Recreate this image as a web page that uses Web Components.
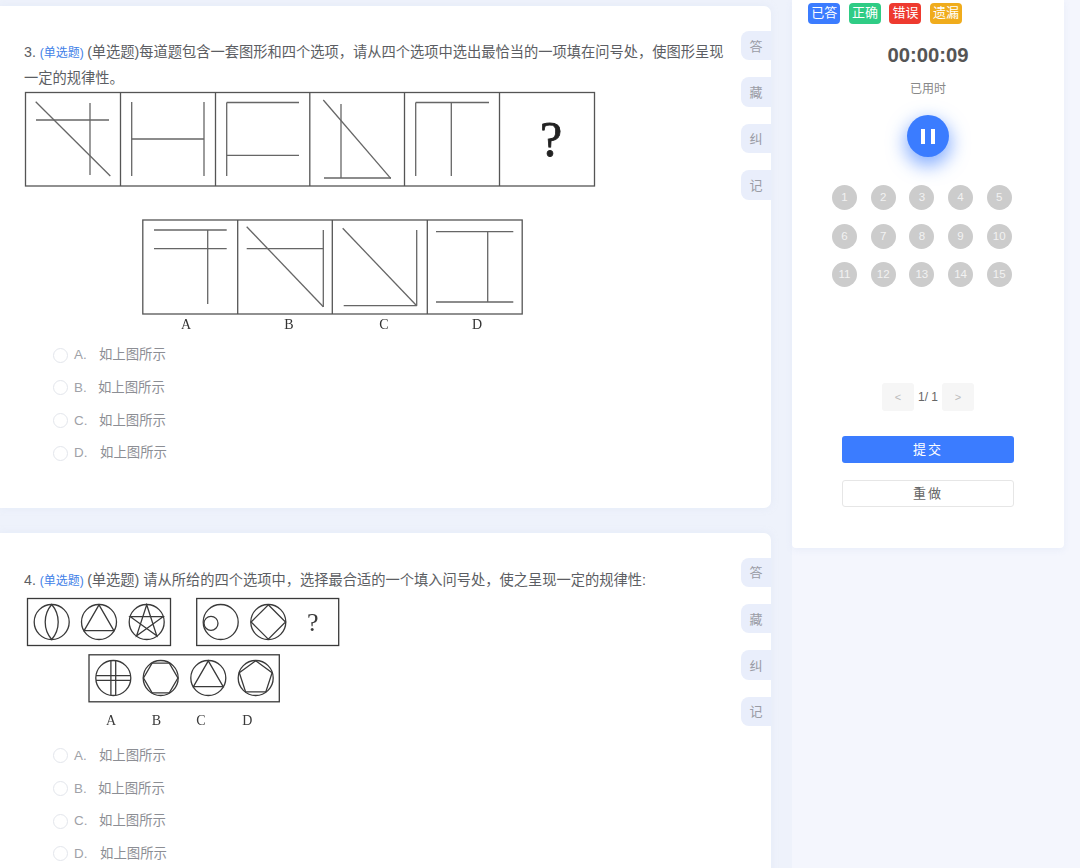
<!DOCTYPE html>
<html lang="zh"><head><meta charset="utf-8"><title>答题</title>
<style>
html,body{margin:0;height:100%;overflow:hidden;background:#f4f6fd;font-family:"Liberation Sans","Noto Sans CJK SC",sans-serif}
</style></head><body>
<exam-page>
  <q-card>
    <q-title num="3." tag="(单选题)">(单选题)每道题包含一套图形和四个选项，请从四个选项中选出最恰当的一项填在问号处，使图形呈现一定的规律性。</q-title>
    <fig-lines></fig-lines>
    <q-option key="A." gap="12.3">如上图所示</q-option><q-option key="B." gap="11.3">如上图所示</q-option><q-option key="C." gap="11.6">如上图所示</q-option><q-option key="D." gap="12.6">如上图所示</q-option>
  </q-card>
  <q-card style="--top:34px">
    <q-title num="4." tag="(单选题)">(单选题) 请从所给的四个选项中，选择最合适的一个填入问号处，使之呈现一定的规律性:</q-title>
    <fig-circles></fig-circles>
    <q-option key="A." gap="12.3">如上图所示</q-option><q-option key="B." gap="11.3">如上图所示</q-option><q-option key="C." gap="11.6">如上图所示</q-option><q-option key="D." gap="12.6">如上图所示</q-option>
  </q-card>
  <side-panel slot="side"></side-panel>
</exam-page>
<script>
function el(name,css,html){
  customElements.define(name,class extends HTMLElement{
    connectedCallback(){
      if(this.shadowRoot)return;
      const r=this.attachShadow({mode:'open'});
      r.innerHTML='<style>'+css+'</style>'+(typeof html==='function'?html(this):html);
    }
  });
}
el('exam-page',`:host{display:flex;align-items:flex-start;width:1080px;height:868px;overflow:hidden}
.main{width:771px;padding:6px 21px 0 0;background:#eef2fb;display:flex;flex-direction:column;gap:25px;min-height:868px}
`,`<div class="main"><slot></slot></div><slot name="side"></slot>`);
el('q-card',`:host{display:flex;background:#fff;border-radius:0 7px 7px 0;box-shadow:0 0 6px rgba(220,228,245,.5)}
.body{flex:1;min-width:0;padding:var(--top,33px) 0 38px 0}
.tabs{width:30px;flex:none;padding-top:25px;display:flex;flex-direction:column;gap:17px}
.tab{height:29.4px;background:#e9eefb;border-radius:8px 0 0 8px;display:flex;align-items:center;justify-content:center;font-size:13px;color:#9a9ca5;padding-bottom:1px;box-sizing:border-box}`,
`<div class="body"><slot></slot></div><div class="tabs"><div class="tab">答</div><div class="tab">藏</div><div class="tab">纠</div><div class="tab">记</div></div>`);
el('q-title',`:host{display:block;padding:0 14px 0 24px;font-size:14.26px;line-height:26px;color:#5c5e63}
.t{color:#3f7fe8;font-size:12px;line-height:1;margin-right:-.7px}`,
h=>`${h.getAttribute('num')} <span class="t">${h.getAttribute('tag')}</span> <slot></slot>`);
el('q-option',`:host{display:flex;align-items:center;height:32.67px;padding-left:53px;font-size:13.4px;color:#8c8e94}
.r{width:13px;height:13px;border:1px solid #e3e6ec;border-radius:50%;margin-right:6px;flex:none;background:#fff}
.x{line-height:20px}
.k{color:#a0a2a8}`,
h=>`<span class="r"></span><span class="x"><span class="k" style="margin-right:${h.getAttribute('gap')}px">${h.getAttribute('key')}</span><slot></slot></span>`);

const L=a=>a.map(p=>`<line x1="${p[0]}" y1="${p[1]}" x2="${p[2]}" y2="${p[3]}"/>`).join('');
el('fig-lines',`:host{display:block;height:248px}
svg{display:block;filter:blur(.35px)}
text{font-family:"Liberation Serif",serif;fill:#333;stroke:none}`,
`<svg width="700" height="248" viewBox="0 91 700 248" fill="none">
<g stroke="#555" stroke-width="1.3">
<rect x="25.5" y="92.5" width="569" height="93.5"/>
${L([[120.5,92,120.5,186],[215.5,92,215.5,186],[309.8,92,309.8,186],[404.5,92,404.5,186],[499.5,92,499.5,186]])}
<rect x="142.8" y="220" width="379.4" height="94"/>
${L([[237.7,220,237.7,314],[332.3,220,332.3,314],[427.3,220,427.3,314]])}
</g>
<g stroke="#666" stroke-width="1.3">
${L([[35.7,101.7,110.3,176],[36,120,109,120],[90,103,90,175],
[131.7,102,131.7,176],[204,102,204,176],[131.7,139,204,139],
[226.7,102.5,226.7,176],[226.7,102.5,299,102.5],[226.7,155.3,299,155.3],
[323.3,100,390.7,178.3],[341,104,341,178],[324,178,391,178],
[415.7,102.5,415.7,176],[451.3,102.5,451.3,176],[415.7,102.5,489,102.5],
[154,230,226.7,230],[154,248.7,226.7,248.7],[207.7,230,207.7,304],
[246.7,226.7,323.3,306.7],[246.7,248.7,323.3,248.7],[323.3,230,323.3,307],
[342.7,228.3,416.7,305.7],[416.7,230,416.7,305.7],[343.7,305.7,416.7,305.7],
[436,231.7,513.3,231.7],[436,302,513.3,302],[487.7,231.7,487.7,302]])}
</g>
<text x="551" y="156" font-size="50" text-anchor="middle" style="fill:#222;stroke:#222;stroke-width:.8">?</text>
<text x="186" y="329" font-size="14" text-anchor="middle">A</text>
<text x="289" y="329" font-size="14" text-anchor="middle">B</text>
<text x="384" y="329" font-size="14" text-anchor="middle">C</text>
<text x="477" y="329" font-size="14" text-anchor="middle">D</text>
</svg>`);

function pts(cx,cy,r,n,start,step){let s=[];for(let i=0;i<n;i++){const a=(start+i*step*360/n)*Math.PI/180;s.push((cx+r*Math.cos(a)).toFixed(1)+','+(cy+r*Math.sin(a)).toFixed(1));}return s.join(' ');}
const C=(x,y,r=17.5)=>`<circle cx="${x}" cy="${y}" r="${r}"/>`;
const P=(x,y,n,start,step=1,r=17.2)=>`<polygon points="${pts(x,y,r,n,start,step)}"/>`;
el('fig-circles',`:host{display:block;height:147px}
svg{display:block;filter:blur(.3px)}
text{font-family:"Liberation Serif",serif;fill:#3a3a3a;stroke:none}`,
`<svg width="400" height="147" viewBox="0 593 400 147" fill="none"><g stroke="#3a3a3a" stroke-width="1.3">
<rect x="27.5" y="598.5" width="143" height="47"/><rect x="196.7" y="598.5" width="142" height="47"/><rect x="89" y="654.8" width="190.3" height="47"/>
${C(51.7,622)}<path d="M51.7 604.5A26.8 26.8 0 0 0 51.7 639.5A26.8 26.8 0 0 0 51.7 604.5Z"/>
${C(99,622)}${P(99,622,3,-90)}
${C(146.7,622)}${P(146.7,622,5,-90,2)}
${C(220.7,622)}${C(211,623.3,7)}
${C(268.3,622)}${P(268.3,622,4,-90)}
${C(113.3,678)}${L([[110.9,660.7,110.9,695.3],[115.7,660.7,115.7,695.3],[96,675.6,130.6,675.6],[96,680.4,130.6,680.4]])}
${C(160.7,678)}${P(160.7,678,6,0)}
${C(208.3,678)}${P(208.3,678,3,-90)}
${C(255.7,678)}${P(255.7,678,5,-90)}
</g>
<text x="312.7" y="631" font-size="26" text-anchor="middle">?</text>
<text x="111" y="725" font-size="14" text-anchor="middle">A</text>
<text x="156.3" y="725" font-size="14" text-anchor="middle">B</text>
<text x="201" y="725" font-size="14" text-anchor="middle">C</text>
<text x="247.3" y="725" font-size="14" text-anchor="middle">D</text>
</svg>`);

el('side-panel',`:host{display:block;width:272px;height:548px;background:#fff;border-radius:0 0 4px 4px;box-shadow:0 2px 6px rgba(225,232,248,.6);color:#555;flex:none}
.badges{display:flex;gap:8.6px;padding:3px 0 0 16.3px}
.b{width:32px;height:21px;border-radius:4px;color:#fff;font-size:13px;line-height:20px;text-align:center}
.time{margin-top:19px;text-align:center;font-size:20.3px;font-weight:700;line-height:24px}
.used{margin-top:13px;text-align:center;font-size:12px;line-height:18px;color:#888}
.pause{width:42px;height:42px;border-radius:50%;background:#3b7cff;margin:17px auto 0;box-shadow:0 7px 18px 2px rgba(59,124,255,.6);display:flex;align-items:center;justify-content:center;gap:6.5px}
.pause i{width:3.6px;height:15px;background:#fff}
.grid{display:grid;grid-template-columns:repeat(5,25px);gap:13.7px;padding:28px 0 0 40px}
.n{height:25px;border-radius:50%;background:#ccc;color:#f2f2f2;font-size:11.5px;line-height:24px;text-align:center}
.pager{margin-top:96px;display:flex;justify-content:center;align-items:center;gap:4px;font-size:12px;color:#666}
.pg{width:32px;height:28px;background:#f6f6f6;border-radius:3px;color:#bbb;display:flex;align-items:center;justify-content:center;font-size:11px}
.cur{width:20px;text-align:center;white-space:pre}
.btn{display:flex;align-items:center;justify-content:center;width:172px;box-sizing:border-box;height:27px;margin:25px auto 0;padding-bottom:2px;border-radius:3px;background:#3b7cff;color:#fff;font-size:13px;letter-spacing:2px}
.btn.o{background:#fff;border:1px solid #e6e6e6;color:#666;margin-top:17px}`,
`<div class="badges"><div class="b" style="background:#3b7cff">已答</div><div class="b" style="background:#2fcc85">正确</div><div class="b" style="background:#ee3a2f">错误</div><div class="b" style="background:#f0ac1c">遗漏</div></div>
<div class="time">00:00:09</div><div class="used">已用时</div>
<div class="pause"><i></i><i></i></div>
<div class="grid">${Array.from({length:15},(_,i)=>`<div class="n">${i+1}</div>`).join('')}</div>
<div class="pager"><div class="pg">&lt;</div><div class="cur">1/ 1</div><div class="pg">&gt;</div></div>
<div class="btn">提交</div><div class="btn o">重做</div>`);
</script>
</body></html>
